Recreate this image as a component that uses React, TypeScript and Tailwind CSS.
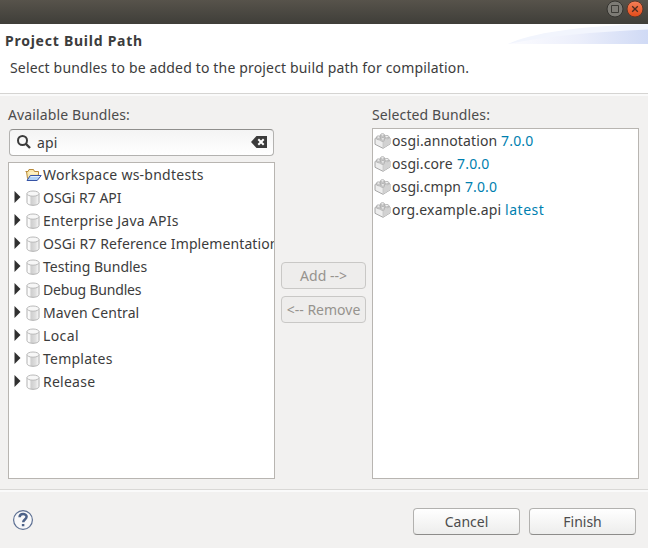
import type { ReactNode } from "react";

const repositories = [
  { name: "OSGi R7 API", tracking: "tracking-[0px]" },
  { name: "Enterprise Java APIs", tracking: "tracking-[0.26px]" },
  { name: "OSGi R7 Reference Implementations", tracking: "tracking-[0.1px]" },
  { name: "Testing Bundles", tracking: "tracking-[0px]" },
  { name: "Debug Bundles", tracking: "tracking-[-0.2px]" },
  { name: "Maven Central", tracking: "tracking-[0.08px]" },
  { name: "Local", tracking: "tracking-[0.4px]" },
  { name: "Templates", tracking: "tracking-[0.23px]" },
  { name: "Release", tracking: "tracking-[0.25px]" },
];

const selected = [
  { name: "osgi.annotation", version: "7.0.0", width: "w-[109px] tracking-[0.12px]", versionTracking: "tracking-[0.2px]" },
  { name: "osgi.core", version: "7.0.0", width: "w-[65px] tracking-[0.1px]", versionTracking: "tracking-[0.2px]" },
  { name: "osgi.cmpn", version: "7.0.0", width: "w-[73px] tracking-[0.1px]", versionTracking: "tracking-[0.1px]" },
  { name: "org.example.api", version: "latest", width: "w-[113px] tracking-[0.2px]", versionTracking: "tracking-[0.55px]" },
];

function FolderIcon() {
  return (
    <svg width="17" height="16" viewBox="0 0 17 16" className="shrink-0">
      <path d="M1.5 4.5H3L4 2.5h4.5l1 2h4V8l-10 3.5h-1z" fill="#fbe9ad" stroke="#b88a3a" />
      <path d="M.5 4.5h2" stroke="#b88a3a" />
      <path d="M4 6h9" stroke="#fff9df" />
      <path d="M2 13.5 5.3 8.5h10.9l-4 5z" fill="#b0d2f8" stroke="#3553a5" strokeLinejoin="round" />
      <path d="M5.8 9.5h8.8" stroke="#e2effd" />
    </svg>
  );
}

function DatabaseIcon() {
  return (
    <svg width="14" height="16" viewBox="0 0 14 16" className="shrink-0">
      <defs>
        <linearGradient id="cylinder">
          <stop offset="0" stopColor="#fff" />
          <stop offset=".2" stopColor="#fafafa" />
          <stop offset=".35" stopColor="#cfcfcf" />
          <stop offset=".7" stopColor="#dedede" />
          <stop offset="1" stopColor="#fafafa" />
        </linearGradient>
      </defs>
      <path d="M1 3.5v9C1 14 3.5 15.3 7 15.3s6-1.3 6-2.8v-9" fill="url(#cylinder)" stroke="#b0b0b0" />
      <ellipse cx="7" cy="3.6" rx="6" ry="2.6" fill="#f7f7f7" stroke="#bababa" />
    </svg>
  );
}

function BrickIcon() {
  return (
    <svg width="17" height="16" viewBox="0 0 17 16" className="shrink-0">
      <path d="m1 5.5 7.5-3.5L16 5v6l-7 4.3-8-4z" fill="#ededed" stroke="#a6a6a6" strokeLinejoin="round" />
      <path d="m9 8.5 7-3.3V11l-7 4.3z" fill="#d2d2d2" />
      <path d="m1 5.5 8 3.2v6.6" fill="none" stroke="#c2c2c2" strokeWidth=".7" />
      <g fill="#f5f5f5" stroke="#a2a2a2" strokeWidth=".8">
        <path d="M6.5 2v1.3c0 1.2 4 1.2 4 0V2" />
        <ellipse cx="8.5" cy="1.9" rx="2" ry="1.2" />
        <path d="M2.5 4.2v1.3c0 1.2 4 1.2 4 0V4.2" />
        <ellipse cx="4.5" cy="4.1" rx="2" ry="1.2" />
        <path d="M10.8 3.8v1.3c0 1.2 4 1.2 4 0V3.8" />
        <ellipse cx="12.8" cy="3.7" rx="2" ry="1.2" />
        <path d="M6.8 6v1.3c0 1.2 4 1.2 4 0V6" />
        <ellipse cx="8.8" cy="5.9" rx="2" ry="1.2" />
      </g>
    </svg>
  );
}

function DialogButton({ children }: { children: ReactNode }) {
  return (
    <button className="h-[27px] w-[107px] rounded-[4px] border border-[#b2b1af] border-b-[#8d8c8a] bg-linear-to-b from-white to-[#ededec] pt-px leading-[24px] text-[#4c4c4c]">
      {children}
    </button>
  );
}

export default function App() {
  return (
    <div className="flex h-[548px] w-[648px] flex-col overflow-hidden bg-[#f2f1f0] font-['Noto_Sans',sans-serif] text-[14px] whitespace-nowrap text-[#3c3c3c]">
      <div className="flex h-[24px] shrink-0 justify-end gap-[2px] bg-linear-to-b from-[#57534b] to-[#3f3e39] pr-[4px]">
        <svg width="18" height="18" viewBox="0 0 18 18">
          <circle cx="9" cy="9" r="8" fill="#7d7b75" stroke="#34332f" />
          <path d="M5.5 5.5h7v7h-7z" fill="none" stroke="#3b3a35" />
        </svg>
        <svg width="18" height="18" viewBox="0 0 18 18">
          <defs>
            <linearGradient id="close" x2="0" y2="1">
              <stop stopColor="#f58059" />
              <stop offset="1" stopColor="#e34a18" />
            </linearGradient>
          </defs>
          <circle cx="9" cy="9" r="8" fill="url(#close)" stroke="#59372a" />
          <path d="m6.2 6.2 5.6 5.6m0-5.6-5.6 5.6" stroke="#4b2c20" strokeWidth="1.3" />
        </svg>
      </div>

      <header className="flex h-[69px] shrink-0 justify-between bg-white">
        <div>
          <h1 className="mt-[7px] pl-[5px] text-[14px] leading-[20px] font-bold tracking-[0.75px]">Project Build Path</h1>
          <p className="mt-[7px] pl-[10px] leading-[20px] tracking-[0.16px]">Select bundles to be added to the project build path for compilation.</p>
        </div>
        <svg width="140" height="20" viewBox="0 0 140 20">
          <defs>
            <linearGradient id="swoosh">
              <stop stopColor="#fcfcff" />
              <stop offset=".5" stopColor="#eceffb" />
              <stop offset="1" stopColor="#d0daf5" />
            </linearGradient>
          </defs>
          <path d="M0 20C23 9 70 2 140 0v20z" fill="#f2f5fd" />
          <path d="M0 20C38 12 85 8 140 5.5V20z" fill="url(#swoosh)" />
        </svg>
      </header>
      <div className="h-[3px] shrink-0 border-t border-[#d5d4d2] bg-[#fafafa]" />

      <main className="flex h-[393px] shrink-0 pt-[9px] pl-[8px]">
        <section className="w-[267px]">
          <h2 className="h-[24px] leading-[20px] tracking-[0.12px] text-[#4c4c4c]">Available Bundles:</h2>
          <div className="ml-px flex h-[27px] w-[265px] items-center rounded-[4px] border border-[#b3b2b0] border-t-[#8f8e8c] bg-linear-to-b from-[#f4f4f4] to-white">
            <svg width="17" height="17" viewBox="0 0 17 17" className="ml-[6px]">
              <circle cx="6.5" cy="6.5" r="4.5" fill="none" stroke="#3c3c3c" strokeWidth="2" />
              <path d="m9.5 9.5 4.5 4.5" stroke="#3c3c3c" strokeWidth="2.4" />
            </svg>
            <span className="ml-[4px] flex-1 leading-[20px] tracking-[0.2px]">api</span>
            <svg width="16" height="12" viewBox="0 0 16 12" className="mr-[6px] mb-[2px]">
              <path d="M5.5 0H16v12H5.5L0 6z" fill="#3c3c3c" />
              <path d="m7.3 3.3 5.4 5.4m0-5.4L7.3 8.7" stroke="#fff" strokeWidth="2" />
            </svg>
          </div>
          <div className="mt-[6px] h-[317px] overflow-hidden border border-[#b8b5b1] bg-white">
            <div className="flex h-[23px] items-center pl-[16px]">
              <FolderIcon />
              <span className="ml-px tracking-[0.25px]">Workspace ws-bndtests</span>
            </div>
            {repositories.map((item) => (
              <div key={item.name} className="flex h-[23px] items-center pl-[5px]">
                <svg width="7" height="12" viewBox="0 0 7 12" className="mb-[2px] shrink-0">
                  <path d="M.5 0v12L6.5 6z" fill="#303030" />
                </svg>
                <span className="mt-px ml-[5px] flex"><DatabaseIcon /></span>
                <span className={`ml-[3px] ${item.tracking}`}>{item.name}</span>
              </div>
            ))}
          </div>
        </section>

        <div className="mx-[6px] flex w-[85px] flex-col gap-[7px] pt-[157px] text-[#96938e]">
          <button disabled className="h-[27px] rounded-[4px] border border-[#c9c8c6] bg-[#eeedec] leading-[24px]">Add --&gt;</button>
          <button disabled className="h-[27px] rounded-[4px] border border-[#c9c8c6] bg-[#eeedec] leading-[24px]">&lt;-- Remove</button>
        </div>

        <section className="w-[267px]">
          <h2 className="h-[23px] leading-[20px] tracking-[0.12px] text-[#4c4c4c]">Selected Bundles:</h2>
          <div className="h-[351px] border border-[#b8b5b1] bg-white">
            {selected.map((item) => (
              <div key={item.name} className="flex h-[23px] items-center pl-px">
                <BrickIcon />
                <span className={`ml-px ${item.width}`}>{item.name}</span>
                <span className={`text-[#007fb0] ${item.versionTracking}`}>{item.version}</span>
              </div>
            ))}
          </div>
        </section>
      </main>
      <div className="h-[3px] shrink-0 border-t border-[#d9d8d6] bg-[#fafafa]" />

      <footer className="flex flex-1 items-start pt-[16px] pr-[12px] pl-[12px]">
        <svg width="22" height="22" viewBox="0 0 22 22" className="mt-px">
          <circle cx="11" cy="11" r="9.4" fill="#f8f8f9" stroke="#5d7093" strokeWidth="1.2" />
          <path d="M7.6 8.2c0-4.2 7-4 7-.4 0 2.6-3.3 2.8-3.4 5.4M11.1 15.1v2.2" fill="none" stroke="#4d6288" strokeWidth="2.5" />
        </svg>
        <div className="ml-auto flex gap-[9px]">
          <DialogButton>Cancel</DialogButton>
          <DialogButton>Finish</DialogButton>
        </div>
      </footer>
    </div>
  );
}
